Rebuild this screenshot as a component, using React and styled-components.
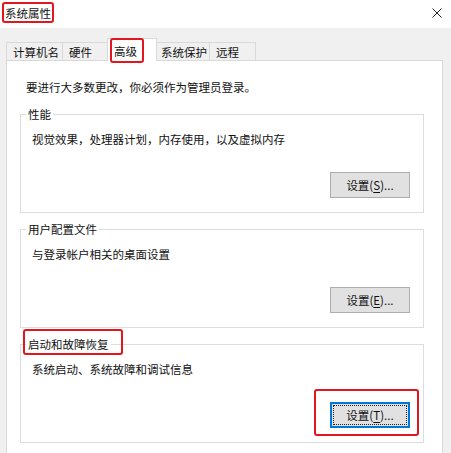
import styled, { createGlobalStyle } from 'styled-components';

const GlobalStyle = createGlobalStyle`
  html, body {
    margin: 0;
    padding: 0;
    background: #f0f0f0;
  }
  body {
    font-family: "Noto Sans CJK SC", "Microsoft YaHei", sans-serif;
    font-size: 11.5px;
    color: #111;
  }
`;

const Window = styled.div`
  width: 451px;
  height: 453px;
  overflow: hidden;
  background: #f0f0f0;
  display: flex;
  flex-direction: column;
`;

const TitleBar = styled.div`
  height: 28px;
  flex: none;
  background: #fff;
  display: flex;
  justify-content: space-between;
  align-items: flex-start;
`;

const Title = styled.span`
  position: relative;
  margin: 5px 0 0 5px;
  line-height: 16px;
`;

// red annotation frame drawn over a piece of the dialog
const Mark = styled.span`
  position: absolute;
  top: ${(p) => p.$t}px;
  right: ${(p) => p.$r}px;
  bottom: ${(p) => p.$b}px;
  left: ${(p) => p.$l}px;
  border: 2.5px solid #e3161e;
  border-radius: 3px;
  pointer-events: none;
`;

const Close = styled.svg`
  margin: 8px 9px 0 0;
  width: 10px;
  height: 10px;
`;

const Body = styled.div`
  flex: 1;
  padding: 10px 0 0 6px;
`;

const TabStrip = styled.div`
  display: flex;
  align-items: flex-end;
  height: 22px;
`;

const Tab = styled.div`
  position: relative;
  box-sizing: border-box;
  width: ${(p) => p.$w}px;
  height: 18px;
  padding: 1px 0 0 6px;
  line-height: 16px;
  background: #f0f0f0;
  border: 1px solid #d9d9d9;
  border-bottom: none;
  margin-left: -1px;
  &:first-child {
    margin-left: 0;
  }
`;

const ActiveTab = styled(Tab)`
  z-index: 2;
  width: ${(p) => p.$w + 4}px;
  height: 23px;
  margin: 0 -2px -1px -3px;
  padding: 4px 0 0 6px;
  background: #fff;
`;

const TabText = styled.span`
  position: relative;
`;

const Panel = styled.div`
  position: relative;
  z-index: 1;
  box-sizing: border-box;
  width: 437px;
  height: 400px;
  background: #fff;
  border: 1px solid #d9d9d9;
  padding: 18px 0 0 13px;
`;

const Notice = styled.div`
  margin-left: 6px;
  line-height: 16px;
`;

const Group = styled.fieldset`
  box-sizing: border-box;
  width: 404px;
  margin: ${(p) => (p.$first ? 11 : 8)}px 0 0 0;
  padding: 0 13px 14px 5px;
  border: 1px solid #dcdcdc;
  min-width: 0;
`;

const Legend = styled.legend`
  position: relative;
  padding: 0 2px;
  line-height: 16px;
`;

const Desc = styled.div`
  margin: 9px 0 0 6px;
  line-height: 16px;
`;

const ButtonRow = styled.div`
  display: flex;
  justify-content: flex-end;
  margin-top: 25px;
`;

const Anchor = styled.span`
  position: relative;
  display: inline-flex;
`;

const Button = styled.button`
  position: relative;
  box-sizing: border-box;
  width: 80px;
  height: 26px;
  padding: 0;
  font: inherit;
  color: #111;
  background: #e1e1e1;
  border: 1px solid ${(p) => (p.$focused ? '#0078d7' : '#adadad')};
  box-shadow: ${(p) => (p.$focused ? 'inset 0 0 0 1px #0078d7' : 'none')};
  &::after {
    content: '';
    display: ${(p) => (p.$focused ? 'block' : 'none')};
    position: absolute;
    inset: 2px;
    border: 1px dotted #222;
  }
  u {
    text-decoration: underline;
    text-underline-offset: 2px;
  }
`;

const tabs = [
  { label: '计算机名', w: 57 },
  { label: '硬件', w: 48 },
  { label: '高级', w: 46, active: true },
  { label: '系统保护', w: 56 },
  { label: '远程', w: 47 },
];

const groups = [
  { title: '性能', desc: '视觉效果，处理器计划，内存使用，以及虚拟内存', key: 'S' },
  { title: '用户配置文件', desc: '与登录帐户相关的桌面设置', key: 'E' },
  { title: '启动和故障恢复', desc: '系统启动、系统故障和调试信息', key: 'T', marked: true },
];

export default function App() {
  return (
    <Window>
      <GlobalStyle />
      <TitleBar>
        <Title>
          系统属性
          <Mark $t={-3} $r={-3} $b={-2} $l={-3} />
        </Title>
        <Close viewBox="0 0 10 10">
          <path d="M0.5 0.5 L9.5 9.5 M9.5 0.5 L0.5 9.5" stroke="#222" strokeWidth="1" fill="none" />
        </Close>
      </TitleBar>
      <Body>
        <TabStrip>
          {tabs.map((t) =>
            t.active ? (
              <ActiveTab key={t.label} $w={t.w}>
                <TabText>
                  {t.label}
                  <Mark $t={-5} $r={-7} $b={-4} $l={-4} />
                </TabText>
              </ActiveTab>
            ) : (
              <Tab key={t.label} $w={t.w}>
                {t.label}
              </Tab>
            )
          )}
        </TabStrip>
        <Panel>
          <Notice>要进行大多数更改，你必须作为管理员登录。</Notice>
          {groups.map((g, i) => (
            <Group key={g.title} $first={i === 0}>
              <Legend>
                {g.title}
                {g.marked && <Mark $t={-7} $r={-12} $b={-3} $l={-3} />}
              </Legend>
              <Desc>{g.desc}</Desc>
              <ButtonRow>
                <Anchor>
                  <Button $focused={g.marked}>
                    设置(<u>{g.key}</u>)...
                  </Button>
                  {g.marked && <Mark $t={-13} $r={-9} $b={-8} $l={-16} />}
                </Anchor>
              </ButtonRow>
            </Group>
          ))}
        </Panel>
      </Body>
    </Window>
  );
}
